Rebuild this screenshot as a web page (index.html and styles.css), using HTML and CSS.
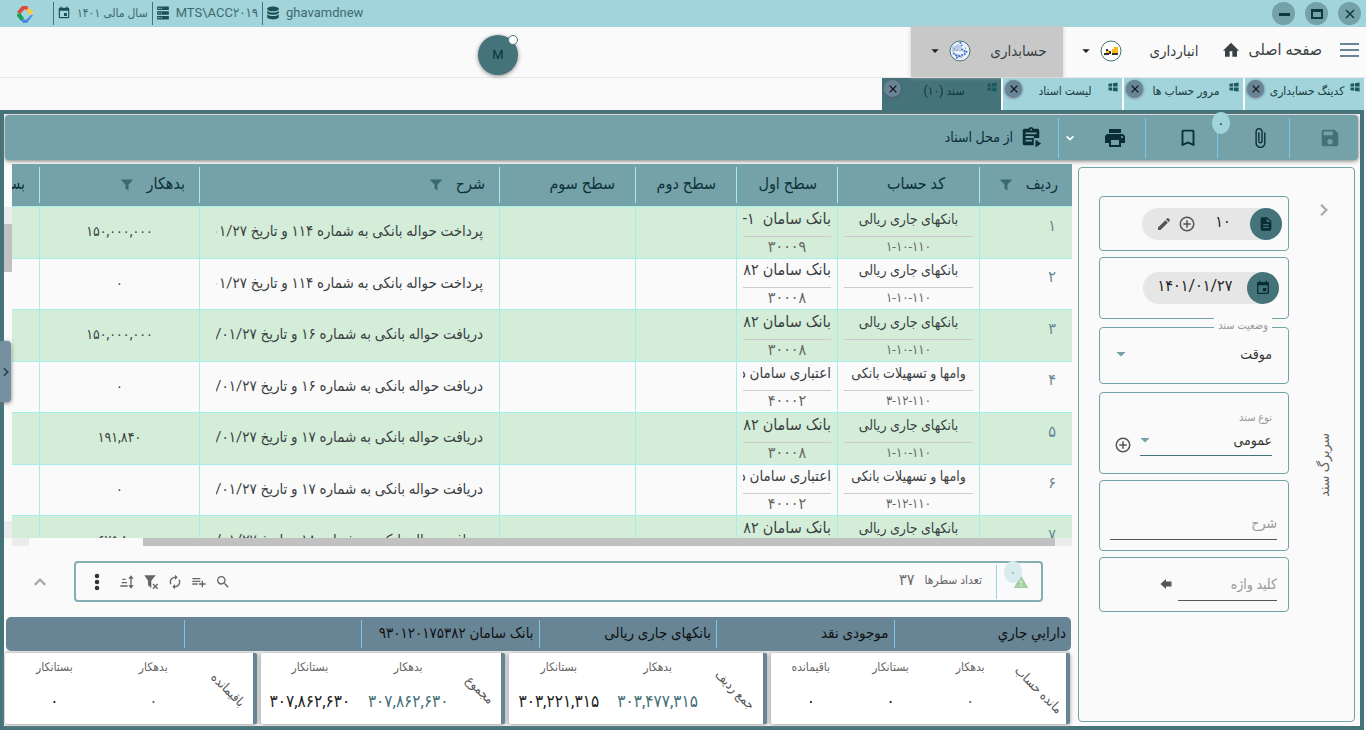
FILE: index.html
```html
<!DOCTYPE html>
<html lang="fa" dir="rtl">
<head>
<meta charset="utf-8">
<title>سند حسابداری</title>
<link rel="stylesheet" href="styles.css">
</head>
<body>
<svg class="symbols" aria-hidden="true">
  <symbol id="i-cal" viewBox="0 0 24 24"><path d="M19 3h-1V1h-2v2H8V1H6v2H5c-1.11 0-2 .9-2 2v14c0 1.1.89 2 2 2h14c1.1 0 2-.9 2-2V5c0-1.1-.9-2-2-2zm0 16H5V8h14v11zM17 12h-5v5h5v-5z"/></symbol>
  <symbol id="i-server" viewBox="0 0 24 24"><path fill-rule="evenodd" d="M2 1h20v6H2zM2 9h20v6H2zM2 17h20v6H2zM4 3v2h2V3zm4 0v2h2V3zM4 11v2h2v-2zm4 0v2h2v-2zM4 19v2h2v-2zm4 0v2h2v-2z"/></symbol>
  <symbol id="i-db" viewBox="0 0 24 24"><path d="M12 1c5.500 0 10 1.800 10 4s-4.500 4-10 4S2 7.200 2 5s4.500-4 10-4zM2 8c2 2.400 6 3 10 3s8-.6 10-3v3c0 2.200-4.500 4-10 4S2 13.200 2 11zM2 14c2 2.400 6 3 10 3s8-.6 10-3v5c0 2.200-4.500 4-10 4S2 21.200 2 19z"/></symbol>
  <symbol id="i-home" viewBox="0 0 24 24"><path d="M10 22v-8h4v8h7v-9h3L12 1 0 13h3v9z"/></symbol>
  <symbol id="i-win" viewBox="0 0 24 24"><path d="M1 4l9-1v8H1zM12 2.700L23 1v10H12zM1 13h9v8l-9-1zM12 13h11v10l-11-1.700z"/></symbol>
  <symbol id="i-x" viewBox="0 0 24 24"><path fill="none" stroke="currentColor" stroke-width="3" d="M4 4l16 16M20 4L4 20"/></symbol>
  <symbol id="i-save" viewBox="0 0 24 24"><path d="M17 3H5c-1.110 0-2 .9-2 2v14c0 1.100.89 2 2 2h14c1.100 0 2-.9 2-2V7l-4-4zm-5 16c-1.660 0-3-1.340-3-3s1.340-3 3-3 3 1.340 3 3-1.340 3-3 3zm3-10H5V5h10v4z"/></symbol>
  <symbol id="i-clip" viewBox="0 0 24 24"><path d="M16.500 6v11.500c0 2.210-1.790 4-4 4s-4-1.790-4-4V5c0-1.380 1.120-2.500 2.500-2.500s2.500 1.120 2.500 2.500v10.500c0 .55-.45 1-1 1s-1-.45-1-1V6H10v9.500c0 1.380 1.120 2.500 2.500 2.500s2.500-1.120 2.500-2.500V5c0-2.210-1.790-4-4-4S7 2.790 7 5v12.500c0 3.040 2.460 5.500 5.500 5.500s5.500-2.460 5.500-5.500V6h-1.500z"/></symbol>
  <symbol id="i-mark" viewBox="0 0 24 24"><path d="M17 3H7c-1.100 0-2 .9-2 2v16l7-3 7 3V5c0-1.100-.9-2-2-2zm0 15l-5-2.180L7 18V5h10v13z"/></symbol>
  <symbol id="i-print" viewBox="0 0 24 24"><path d="M19 8H5c-1.660 0-3 1.340-3 3v6h4v4h12v-4h4v-6c0-1.660-1.340-3-3-3zm-3 11H8v-5h8v5zm3-7c-.55 0-1-.45-1-1s.45-1 1-1 1 .45 1 1-.45 1-1 1zm-1-9H6v4h12V3z"/></symbol>
  <symbol id="i-board" viewBox="0 0 24 24"><path fill-rule="evenodd" d="M19 3h-4.200a3 3 0 0 0-5.600 0H5a2 2 0 0 0-2 2v14a2 2 0 0 0 2 2h10v-8h6V5a2 2 0 0 0-2-2zm-7 0a1 1 0 1 1 0 2 1 1 0 0 1 0-2zM6 7h12v2H6zm0 4h9v2H6zm0 4h7v2H6z"/><path d="M17 15l6 4-6 4.500z"/></symbol>
  <symbol id="i-down" viewBox="0 0 24 24"><path fill="none" stroke="currentColor" stroke-width="4" d="M4 8l8 8 8-8"/></symbol>
  <symbol id="i-up" viewBox="0 0 24 24"><path fill="none" stroke="currentColor" stroke-width="4" d="M3 17l9-9 9 9"/></symbol>
  <symbol id="i-right" viewBox="0 0 24 24"><path fill="none" stroke="currentColor" stroke-width="4" d="M7 3l9 9-9 9"/></symbol>
  <symbol id="i-caret" viewBox="0 0 24 24"><path d="M1 7h22L12 18z"/></symbol>
  <symbol id="i-filter" viewBox="0 0 24 24"><path d="M1 1h22v2l-8 8v12l-6-4v-8L1 3z"/></symbol>
  <symbol id="i-doc" viewBox="0 0 24 24"><path d="M14 2H6c-1.100 0-2 .9-2 2v16c0 1.100.89 2 2 2h12c1.100 0 2-.9 2-2V8l-6-6zm2 16H8v-2h8v2zm0-4H8v-2h8v2zm-3-5V3.500L18.500 9H13z"/></symbol>
  <symbol id="i-pen" viewBox="0 0 24 24"><path d="M3 17.250V21h3.750L17.810 9.940l-3.750-3.750L3 17.250zM20.710 7.040c.39-.39.39-1.020 0-1.410l-2.340-2.340c-.39-.39-1.020-.39-1.410 0l-1.830 1.830 3.750 3.750 1.830-1.830z"/></symbol>
  <symbol id="i-plus" viewBox="0 0 24 24"><path fill="none" stroke="currentColor" stroke-width="2" d="M12 7v10M7 12h10M12 3a9 9 0 1 1 0 18 9 9 0 0 1 0-18z"/></symbol>
  <symbol id="i-back" viewBox="0 0 24 24"><path d="M1 12L12 2v5h11v10H12v5z"/></symbol>
  <symbol id="i-search" viewBox="0 0 24 24"><path d="M15.500 14h-.79l-.28-.27A6.470 6.470 0 0 0 16 9.500 6.500 6.500 0 1 0 9.500 16c1.610 0 3.090-.59 4.230-1.570l.27.28v.79l5 4.990L20.490 19l-4.990-5zm-6 0C7.010 14 5 11.990 5 9.500S7.010 5 9.500 5 14 7.010 14 9.500 11.990 14 9.500 14z"/></symbol>
  <symbol id="i-add" viewBox="0 0 24 24"><path d="M14 10H2v2h12v-2zm0-4H2v2h12V6zm4 8v-4h-2v4h-4v2h4v4h2v-4h4v-2h-4zM2 16h8v-2H2v2z"/></symbol>
  <symbol id="i-sync" viewBox="0 0 24 24"><path d="M12 6v3l4-4-4-4v3c-4.420 0-8 3.580-8 8 0 1.570.46 3.030 1.240 4.260L6.700 14.800A5.870 5.870 0 0 1 6 12c0-3.310 2.690-6 6-6zm6.760 1.740L17.300 9.200c.44.84.7 1.790.7 2.800 0 3.310-2.690 6-6 6v-3l-4 4 4 4v-3c4.420 0 8-3.580 8-8 0-1.570-.46-3.030-1.240-4.260z"/></symbol>
  <symbol id="i-nofilter" viewBox="0 0 24 24"><path d="M2 2h17l-6.500 8v11l-5-4v-7z"/><path fill="none" stroke="currentColor" stroke-width="2" d="M15 15l7 7M22 15l-7 7"/></symbol>
  <symbol id="i-sort" viewBox="0 0 24 24"><path d="M2 17h11v2H2zM4 12h8v2H4zM5 7h5v2H5zM17 7h-3l4-5 4 5h-3v10h3l-4 5-4-5h3z"/></symbol>
  <symbol id="i-dots" viewBox="0 0 24 24"><circle cx="12" cy="4" r="3"/><circle cx="12" cy="12" r="3"/><circle cx="12" cy="20" r="3"/></symbol>
  <symbol id="i-warn" viewBox="0 0 24 24"><path d="M1 21h22L12 2 1 21zm12-3h-2v-2h2v2zm0-4h-2v-4h2v4z"/></symbol>
</svg>

<header class="titlebar">
  <div class="win-buttons">
    <button type="button" aria-label="بستن"><svg class="s12"><use href="#i-x"/></svg></button>
    <button type="button" aria-label="بزرگ‌نمایی"><svg class="s14" viewBox="0 0 14 14"><path d="M1 2h12v10H1zM3 5v5h8V5z" fill-rule="evenodd"/></svg></button>
    <button type="button" aria-label="کوچک‌نمایی"><svg class="s14" viewBox="0 0 14 14"><path d="M2 6h11v3H2z"/></svg></button>
  </div>
  <div class="status" dir="ltr">
    <svg class="logo" viewBox="0 0 16 18"><path fill="#dd4b3e" d="M0 7l5-6h5l2 3-2 2-2-2-5 5z"/><path fill="#fdc93e" d="M12 3l4 4v2l-3 1-4-5z"/><path fill="#4a86e8" d="M16 10l-6 8H6l-2-3 2-1 3 1 5-5z"/><path fill="#19a05a" d="M0 9l3-1 4 5-3 3-4-5z"/></svg>
    <span class="status-item"><svg class="s14"><use href="#i-cal"/></svg><span class="small" dir="rtl">سال مالی ۱۴۰۱</span></span>
    <span class="status-item"><svg class="s14"><use href="#i-server"/></svg><span>MTS\ACC۲۰۱۹</span></span>
    <span class="status-item"><svg class="s14"><use href="#i-db"/></svg><span>ghavamdnew</span></span>
  </div>
</header>

<nav class="nav">
  <button class="burger" type="button" aria-label="منو"><svg viewBox="0 0 19 14"><path fill="none" stroke="currentColor" stroke-width="2" d="M0 1h19M0 7h19M0 13h19"/></svg></button>
  <a class="home" href="#">صفحه اصلی <svg class="s16"><use href="#i-home"/></svg></a>
  <a class="module" href="#">انبارداری
    <svg class="module-icon" viewBox="0 0 22 22"><circle cx="11" cy="11" r="10" fill="#fff" stroke="#45737a"/><path fill="#fdb813" d="M12 9h2V7h4v6h-6zM6 10h3v4H6z"/><path fill="#333" d="M4 13h5v2H4zM12 13h6v2h-6zM6 9h2v2H6zM9 11h2v3H9z"/></svg>
    <svg class="s8"><use href="#i-caret"/></svg></a>
  <a class="module active" href="#">حسابداری
    <svg class="module-icon" viewBox="0 0 22 22"><circle cx="11" cy="11" r="10" fill="#eef3fb" stroke="#45737a"/><path fill="#b9cbe8" d="M3 7l6-3 4 3-4 4-6 1z"/><path fill="none" stroke="#4b7fd9" stroke-width="2" stroke-dasharray="2 1" d="M4 13l5 3 6-1 3-4M11 2l2 4M7 18l6-3M12 9l5 3"/><path stroke="#666" stroke-dasharray="1 2" fill="none" d="M5 9l5 2 7-3M6 15l8 3"/></svg>
    <svg class="s8"><use href="#i-caret"/></svg></a>
  <button class="avatar" type="button">M<span class="avatar-dot"></span></button>
</nav>

<div class="tabs">
  <div class="tab"><svg class="win s10"><use href="#i-win"/></svg><a href="#">کدینگ حسابداری</a><button type="button" aria-label="بستن"><svg class="s10"><use href="#i-x"/></svg></button></div>
  <div class="tab"><svg class="win s10"><use href="#i-win"/></svg><a href="#">مرور حساب ها</a><button type="button" aria-label="بستن"><svg class="s10"><use href="#i-x"/></svg></button></div>
  <div class="tab"><svg class="win s10"><use href="#i-win"/></svg><a href="#">لیست اسناد</a><button type="button" aria-label="بستن"><svg class="s10"><use href="#i-x"/></svg></button></div>
  <div class="tab current"><svg class="win s10"><use href="#i-win"/></svg><a href="#">سند (۱۰)</a><button type="button" aria-label="بستن"><svg class="s10"><use href="#i-x"/></svg></button></div>
</div>

<main class="frame">
  <div class="toolbar">
    <button class="tool" type="button" disabled aria-label="ذخیره"><svg class="s22"><use href="#i-save"/></svg></button>
    <button class="tool" type="button" aria-label="پیوست"><svg class="s22"><use href="#i-clip"/></svg><span class="badge">۰</span></button>
    <button class="tool" type="button" aria-label="نشان"><svg class="s22"><use href="#i-mark"/></svg></button>
    <button class="tool plain" type="button" aria-label="چاپ"><svg class="s24"><use href="#i-print"/></svg></button>
    <button class="tool more" type="button" aria-label="بیشتر"><svg class="s10"><use href="#i-down"/></svg></button>
    <button class="tool label" type="button"><svg class="s22"><use href="#i-board"/></svg>از محل اسناد</button>
  </div>

  <div class="content">
    <aside class="side">
      <div class="side-title"><svg class="s14"><use href="#i-right"/></svg><h2>سربرگ سند</h2></div>
      <form class="fields">
        <div class="box h54">
          <span class="chip"><span class="dot"><svg class="s16"><use href="#i-doc"/></svg></span><b>۱۰</b>
            <button type="button" aria-label="افزودن"><svg class="s18"><use href="#i-plus"/></svg></button>
            <button type="button" aria-label="ویرایش"><svg class="s16"><use href="#i-pen"/></svg></button></span>
        </div>
        <div class="box h62 date"><span class="chip"><span class="dot"><svg class="s16"><use href="#i-cal"/></svg></span><b>۱۴۰۱/۰۱/۲۷</b></span></div>
        <div class="box h56 state"><label class="legend" for="state">وضعیت سند</label>
          <span class="select"><select id="state"><option>موقت</option></select><svg class="s10"><use href="#i-caret"/></svg></span></div>
        <div class="box h82 kind"><div class="kind-field"><label for="kind">نوع سند</label>
          <span class="select line"><select id="kind"><option>عمومی</option></select><svg class="s10"><use href="#i-caret"/></svg></span></div>
          <button type="button" aria-label="افزودن"><svg class="s18"><use href="#i-plus"/></svg></button></div>
        <div class="box h72 note"><input type="text" placeholder="شرح" aria-label="شرح"></div>
        <div class="box h54 key"><input type="text" placeholder="کلید واژه" aria-label="کلید واژه"><button type="button" aria-label="ثبت"><svg class="s12"><use href="#i-back"/></svg></button></div>
      </form>
    </aside>

    <section class="work">
      <div class="grid">
        <div class="viewport">
          <table>
            <colgroup><col class="c-row"><col class="c-code"><col class="c-lvl"><col class="c-lvl"><col class="c-third"><col class="c-desc"><col class="c-amt"><col class="c-amt"></colgroup>
            <thead><tr><th class="start">ردیف <svg class="s12"><use href="#i-filter"/></svg></th><th class="code">کد حساب</th><th>سطح اول</th><th>سطح دوم</th><th>سطح سوم</th><th class="start">شرح <svg class="s12"><use href="#i-filter"/></svg></th><th class="start">بدهکار <svg class="s12"><use href="#i-filter"/></svg></th><th class="start">بستانکار</th></tr></thead>
            <tbody>
              <tr><td>۱</td><td><p>بانکهای جاری ریالی</p><p>۱-۱۰-۱۱۰</p></td><td><p>بانک سامان &nbsp;۱-۸۱۰-۸۴۹</p><p>۳۰۰۰۹</p></td><td></td><td></td><td><div>پرداخت حواله بانکی به شماره ۱۱۴ و تاریخ ۱۴۰۱/۰۱/۲۷</div></td><td>۱۵۰,۰۰۰,۰۰۰</td><td></td></tr>
              <tr><td>۲</td><td><p>بانکهای جاری ریالی</p><p>۱-۱۰-۱۱۰</p></td><td><p>بانک سامان ۹۳۰۱۲۰۱۷۵۳۸۲</p><p>۳۰۰۰۸</p></td><td></td><td></td><td><div>پرداخت حواله بانکی به شماره ۱۱۴ و تاریخ ۱۴۰۱/۰۱/۲۷</div></td><td>۰</td><td></td></tr>
              <tr><td>۳</td><td><p>بانکهای جاری ریالی</p><p>۱-۱۰-۱۱۰</p></td><td><p>بانک سامان ۹۳۰۱۲۰۱۷۵۳۸۲</p><p>۳۰۰۰۸</p></td><td></td><td></td><td><div>دریافت حواله بانکی به شماره ۱۶ و تاریخ ۱۴۰۱/۰۱/۲۷</div></td><td>۱۵۰,۰۰۰,۰۰۰</td><td></td></tr>
              <tr><td>۴</td><td><p>وامها و تسهیلات بانکی</p><p>۳-۱۲-۱۱۰</p></td><td><p class="tight">اعتباری سامان ده</p><p>۴۰۰۰۲</p></td><td></td><td></td><td><div>دریافت حواله بانکی به شماره ۱۶ و تاریخ ۱۴۰۱/۰۱/۲۷</div></td><td>۰</td><td></td></tr>
              <tr><td>۵</td><td><p>بانکهای جاری ریالی</p><p>۱-۱۰-۱۱۰</p></td><td><p>بانک سامان ۹۳۰۱۲۰۱۷۵۳۸۲</p><p>۳۰۰۰۸</p></td><td></td><td></td><td><div>دریافت حواله بانکی به شماره ۱۷ و تاریخ ۱۴۰۱/۰۱/۲۷</div></td><td>۱۹۱,۸۴۰</td><td></td></tr>
              <tr><td>۶</td><td><p>وامها و تسهیلات بانکی</p><p>۳-۱۲-۱۱۰</p></td><td><p class="tight">اعتباری سامان ده</p><p>۴۰۰۰۲</p></td><td></td><td></td><td><div>دریافت حواله بانکی به شماره ۱۷ و تاریخ ۱۴۰۱/۰۱/۲۷</div></td><td>۰</td><td></td></tr>
              <tr><td>۷</td><td><p>بانکهای جاری ریالی</p><p>۱-۱۰-۱۱۰</p></td><td><p>بانک سامان ۹۳۰۱۲۰۱۷۵۳۸۲</p><p>۳۰۰۰۸</p></td><td></td><td></td><td><div>دریافت حواله بانکی به شماره ۱۸ و تاریخ ۱۴۰۱/۰۱/۲۷</div></td><td>۶۷۵,۸۰۰</td><td></td></tr>
            </tbody>
          </table>
        </div>
        <div class="vbar"><i></i><b></b><i class="end"></i></div>
        <div class="hbar"><i></i><b></b><i class="end"></i></div>
      </div>

      <div class="count-row">
        <div class="count">
          <span class="alert"><svg class="s16"><use href="#i-warn"/></svg><span class="badge">۰</span></span>
          <span class="count-label">تعداد سطرها</span><span class="count-value">۳۷</span>
          <span class="actions">
            <button type="button" aria-label="جستجو"><svg class="s16"><use href="#i-search"/></svg></button>
            <button type="button" aria-label="افزودن سطر"><svg class="s16"><use href="#i-add"/></svg></button>
            <button type="button" aria-label="بازخوانی"><svg class="s16"><use href="#i-sync"/></svg></button>
            <button type="button" aria-label="حذف فیلتر"><svg class="s16"><use href="#i-nofilter"/></svg></button>
            <button type="button" aria-label="مرتب سازی"><svg class="s16"><use href="#i-sort"/></svg></button>
            <button type="button" class="dark" aria-label="بیشتر"><svg class="s18"><use href="#i-dots"/></svg></button>
          </span>
        </div>
        <button class="collapse" type="button" aria-label="جمع کردن"><svg class="s14"><use href="#i-up"/></svg></button>
      </div>

      <div class="path"><span>دارايي جاري</span><span>موجودی نقد</span><span>بانکهای جاری ریالی</span><span>بانک سامان ۹۳۰۱۲۰۱۷۵۳۸۲</span><span></span><span></span></div>

      <div class="cards">
        <div class="card wide"><h3><span>مانده حساب</span></h3><dl><dt>بدهکار</dt><dd class="debit">۰</dd></dl><dl><dt>بستانکار</dt><dd>۰</dd></dl><dl><dt>باقیمانده</dt><dd>۰</dd></dl></div>
        <div class="card rows"><h3><span>جمع ردیف</span></h3><dl><dt>بدهکار</dt><dd class="debit">۳۰۳,۴۷۷,۳۱۵</dd></dl><dl><dt>بستانکار</dt><dd>۳۰۳,۲۲۱,۳۱۵</dd></dl></div>
        <div class="card total"><h3><span>مجموع</span></h3><dl><dt>بدهکار</dt><dd class="debit">۳۰۷,۸۶۲,۶۳۰</dd></dl><dl><dt>بستانکار</dt><dd>۳۰۷,۸۶۲,۶۳۰</dd></dl></div>
        <div class="card rest"><h3><span>باقیمانده</span></h3><dl><dt>بدهکار</dt><dd class="debit">۰</dd></dl><dl><dt>بستانکار</dt><dd>۰</dd></dl></div>
      </div>
    </section>
  </div>
</main>
<button class="drawer" type="button" aria-label="باز کردن"><svg class="s10"><use href="#i-right"/></svg></button>
</body>
</html>
```
FILE: styles.css
```css
* { box-sizing: border-box; }
html, body { height: 100%; }
body {
  margin: 0; background: #fafafa; color: #3a4144; overflow: hidden;
  display: flex; flex-direction: column; position: relative;
  font: 14px/20px Roboto, "DejaVu Sans Condensed", "DejaVu Sans", sans-serif;
}
button { border: 0; padding: 0; background: none; color: inherit; font: inherit; display: inline-flex; align-items: center; justify-content: center; }
a { color: inherit; text-decoration: none; }
svg { fill: currentColor; flex: none; display: block; }
p, h2, h3, dl, dd { margin: 0; font-weight: 400; }
b { font-weight: 400; }
i { display: block; }
.symbols { position: absolute; width: 0; height: 0; }
.s8 { width: 8px; height: 8px; }
.s10 { width: 10px; height: 10px; }
.s12 { width: 12px; height: 12px; }
.s14 { width: 14px; height: 14px; }
.s16 { width: 16px; height: 16px; }
.s18 { width: 18px; height: 18px; }
.s22 { width: 22px; height: 22px; }
.s24 { width: 24px; height: 24px; }

.titlebar { flex: none; height: 27px; background: #a2d4db; display: flex; align-items: center; justify-content: space-between; padding: 0 5px 0 17px; }
.win-buttons { display: flex; gap: 10px; }
.win-buttons button { width: 23px; height: 23px; border-radius: 50%; background: #74a2a8; color: #0b3a40; }
.status { display: flex; align-items: center; color: #3d6a70; font-size: 13px; }
.logo { width: 16px; height: 18px; margin-right: 20px; }
.status-item { display: flex; align-items: center; gap: 6px; height: 23px; padding: 0 4px 2px 3px; border-left: 1px solid #45737a; }
.status-item svg { color: #1d4f56; }
.small { font-size: 12px; }

.nav { flex: none; height: 51px; border-bottom: 1px solid #e6e6e6; display: flex; align-items: center; padding-right: 7px; font-size: 16px; position: relative; }
.burger { color: #678595; width: 19px; padding-bottom: 4px; }
.burger svg { width: 19px; height: 14px; }
.home { display: flex; align-items: center; gap: 10px; margin-right: 18px; padding-bottom: 4px; }
.module { height: 50px; margin-right: 24px; padding-bottom: 2px; display: flex; align-items: center; color: #3a4144; width: 117px; font-size: 15px; }
.module-icon { width: 22px; height: 22px; margin-right: auto; }
.module .s8 { margin-right: 10px; color: #222; }
.module.active { background: #c8c8c8; box-shadow: 0 0 4px #c8c8c8; width: 152px; padding: 0 16px 2px 20px; margin-right: 19px; }
.avatar { position: absolute; left: 478px; top: 8px; width: 40px; height: 40px; border-radius: 50%; background: #45737a; color: #0b3338; font-size: 13px; box-shadow: 0 1px 4px #888; }
.avatar-dot { position: absolute; right: 0; top: 0; width: 10px; height: 10px; border-radius: 50%; background: #fff; border: 1px solid #45737a; }

.tabs { flex: none; height: 32px; display: flex; gap: 2px; padding-right: 2px; font-size: 12px; }
.tab { width: 119px; background: #a2d4db; display: flex; align-items: flex-start; justify-content: space-between; padding: 2px 4px 0 2px; color: #1c3d42; }
.tab a { white-space: nowrap; line-height: 22px; }
.tab .win { color: #1d5960; margin-top: 2px; }
.tab button { width: 17px; height: 17px; border-radius: 50%; background: #678595; color: #111; box-shadow: 0 1px 3px #557; }
.tab.current { background: #45737a; color: #0d3338; }

.frame { flex: 1; min-height: 0; margin-right: 2px; border: 4px solid #45737a; background: #fafafa; display: flex; flex-direction: column; padding: 1px 1px 2px 0; }
.toolbar { flex: none; height: 45px; margin: 0 1px; border-radius: 4px; background: #75a1a8; box-shadow: 0 1px 4px #777; display: flex; align-items: center; color: #0a2e33; }
.tool { position: relative; width: 72px; height: 40px; border-left: 1px solid #7cc8ea; padding-left: 12px; }
.tool:first-child { width: 69px; }
.tool:disabled { color: #457077; }
.tool.plain { width: 64px; border: 0; padding-left: 4px; }
.tool.more { width: 23px; color: #fff; padding: 0; }
.tool.label { width: auto; border: 0; gap: 7px; padding: 0 16px 2px 0; }
.badge { position: absolute; width: 18px; height: 22px; border-radius: 50%; background: #a2d4db; display: flex; align-items: center; justify-content: center; font-size: 14px; }
.tool .badge { left: -6px; top: -6px; }

.content { flex: 1; min-height: 0; display: flex; gap: 6px; padding-top: 4px; }
.side { flex: none; width: 277px; margin: 3px 4px 2px 0; border: 1px solid #75a1a8; border-radius: 4px; display: flex; color: #444; }
.side-title { width: 65px; display: flex; flex-direction: column; align-items: center; padding: 35px 0 0 5px; color: #aaa; }
.side-title h2 { writing-mode: vertical-rl; transform: rotate(180deg); margin-top: 216px; font-size: 14px; line-height: 20px; color: #666; }
.fields { width: 190px; padding-top: 28px; display: flex; flex-direction: column; gap: 6px; }
.box { border: 1px solid #75a1a8; border-radius: 4px; display: flex; align-items: center; position: relative; }
.h54 { height: 55px; }
.h56 { height: 57px; }
.h62 { height: 62px; }
.h72 { height: 71px; }
.h82 { height: 82px; }
.chip { display: flex; align-items: center; height: 32px; margin-right: 6px; width: 140px; border-radius: 16px; background: #e6e6e6; font-size: 16px; gap: 6px; color: #555; padding-left: 14px; }
.date .chip { margin-right: 9px; width: 136px; padding: 0 0 0 6px; }
.chip b { margin: 0 auto; padding-bottom: 4px; color: #222; }
.dot { width: 32px; height: 32px; border-radius: 50%; background: #45737a; color: #0a2e33; display: flex; align-items: center; justify-content: center; }
.legend { position: absolute; right: 16px; top: -12px; background: #fafafa; padding: 0 4px; font-size: 11px; color: #999; }
.state { margin: 2px 0; padding: 0 16px 4px; }
.select { position: relative; display: flex; flex: 1; align-items: center; color: #75a1a8; }
.select svg { position: absolute; left: 0; }
select { appearance: none; border: 0; background: none; width: 100%; height: 30px; padding: 0; font: inherit; color: #333; }
.kind { padding: 0 16px 0 14px; gap: 8px; color: #555; }
.kind-field { flex: 1; padding-top: 1px; }
.kind-field label { font-size: 11px; color: #999; display: block; line-height: 14px; }
.select.line { border-bottom: 1px solid #45737a; }
.kind button { margin-top: 24px; }
input { border: 0; border-bottom: 1px solid #555; background: none; font: inherit; min-width: 0; flex: 1; height: 34px; padding: 0; color: #333; }
input::placeholder { color: #999; opacity: 1; }
.note { align-items: flex-end; padding: 0 11px 10px 10px; }
.key { align-items: flex-end; padding: 0 11px 10px 60px; gap: 6px; color: #555; }
.key button { height: 34px; }

.work { flex: 1; min-width: 0; display: flex; flex-direction: column; }
.grid { display: grid; grid-template: 374px 8px / minmax(0, 1fr) 8px; }
.viewport { overflow: hidden; }
table { table-layout: fixed; width: 1193px; border-collapse: separate; border-spacing: 0; }
.c-row { width: 93px; }
.c-code { width: 142px; }
.c-lvl { width: 101px; }
.c-third { width: 136px; }
.c-desc { width: 300px; }
.c-amt { width: 160px; }
th { height: 43px; padding: 0 20px 2px 0; text-align: right; background: linear-gradient(#a5eeea, #a5eeea) left center / 1px 36px no-repeat #75a1a8; font-weight: 400; font-size: 16px; color: #0d3338; border-bottom: 1px solid #a5eeea; white-space: nowrap; }
th.code { padding-right: 34px; }
th.start { padding-right: 14px; }
th svg { display: inline-block; vertical-align: middle; margin-right: 10px; color: #386a71; }
td { height: 52px; padding: 0 6px; text-align: center; border-left: 1px solid #a5eeea; border-bottom: 1px solid #a5eeea; background: #d4edd8; }
tr:nth-child(even) td { height: 51px; background: #fafafa; }
td:first-child { text-align: right; padding: 0 16px 14px; color: #678595; font-size: 16px; }
td p { line-height: 22px; height: 28px; overflow: hidden; white-space: nowrap; }
td p + p { border-top: 1px solid #cfc9d0; color: #666; height: 22px; line-height: 20px; }
td:nth-child(2) p + p { font-size: 13px; }
td:nth-child(3) { font-size: 16px; }
td:nth-child(3) p:first-child { text-align: right; }
td .tight { font-size: 15px; }
td div { margin: 0 10px; padding-bottom: 3px; overflow: hidden; white-space: nowrap; text-align: right; font-size: 15px; }
td:nth-child(7) { padding-bottom: 3px; }
.vbar { padding-top: 43px; display: flex; flex-direction: column; }
.vbar i { height: 17px; background: #ececec; }
.vbar b { height: 48px; background: #c1c1c1; }
.vbar .end { margin-top: auto; }
.hbar { display: flex; }
.hbar i { width: 17px; background: #ececec; }
.hbar b { width: 86%; background: #c1c1c1; }
.hbar .end { margin-right: auto; }

.count-row { display: flex; align-items: center; padding: 15px 29px 15px 20px; }
.count { flex: 1; height: 41px; border: 2px solid #84aeb4; border-radius: 4px; display: flex; align-items: center; color: #666; }
.alert { position: relative; width: 45px; height: 34px; border-left: 1px solid #9cd3e6; display: flex; align-items: center; padding-right: 12px; color: #a5cfa5; }
.alert .badge { left: 7px; top: -4px; background: #d8ecef; color: #999; }
.count-label { margin-right: 14px; padding-bottom: 3px; font-size: 12px; }
.count-value { margin-right: 10px; padding-bottom: 3px; font-size: 16px; }
.actions { margin-right: auto; display: flex; gap: 8px; padding: 0 0 0 13px; color: #666; }
.actions button { width: 16px; }
.actions .dark { width: 16px; margin-right: 6px; color: #333; }
.collapse { width: 32px; margin-right: 18px; color: #aaa; }

.path { height: 34px; margin: 0 1px 0 2px; background: #678595; border-radius: 5px; display: grid; grid-template-columns: repeat(6, 1fr); align-items: center; color: #111; font-size: 15px; }
.path span { padding-right: 5px; height: 28px; line-height: 26px; border-left: 1px solid #7cc8ea; white-space: nowrap; }
.path span:last-child { border: 0; }
.cards { flex: 1; display: flex; gap: 4px; padding-top: 2px; margin: 0 2px 0 1px; background: #e6e6e6; }
.card { min-width: 0; background: #fff; border-right: 4px solid #678595; border-radius: 2px; box-shadow: 0 1px 4px #999; display: flex; padding-top: 2px; }
.card.wide { flex: 299; }
.card.rows { flex: 257; }
.card.total { flex: 244; }
.card.rest { flex: 251; }
.card h3 { flex: none; width: 56px; display: flex; align-items: center; justify-content: center; font-size: 13px; color: #555; }
.card.total h3 { width: 44px; }
.card.rest h3 { width: 50px; }
.card h3 span { transform: rotate(45deg); white-space: nowrap; }
.card dl { flex: 1; text-align: center; }
dt { font-size: 12px; line-height: 24px; color: #666; }
dd { margin-top: 10px; line-height: 24px; font-size: 17px; color: #222; }
.debit { color: #457077; }
.drawer { position: absolute; left: 0; top: 341px; width: 11px; height: 61px; background: #7590a0; border-radius: 0 4px 4px 0; color: #24434c; box-shadow: 0 1px 4px #777; }
```
